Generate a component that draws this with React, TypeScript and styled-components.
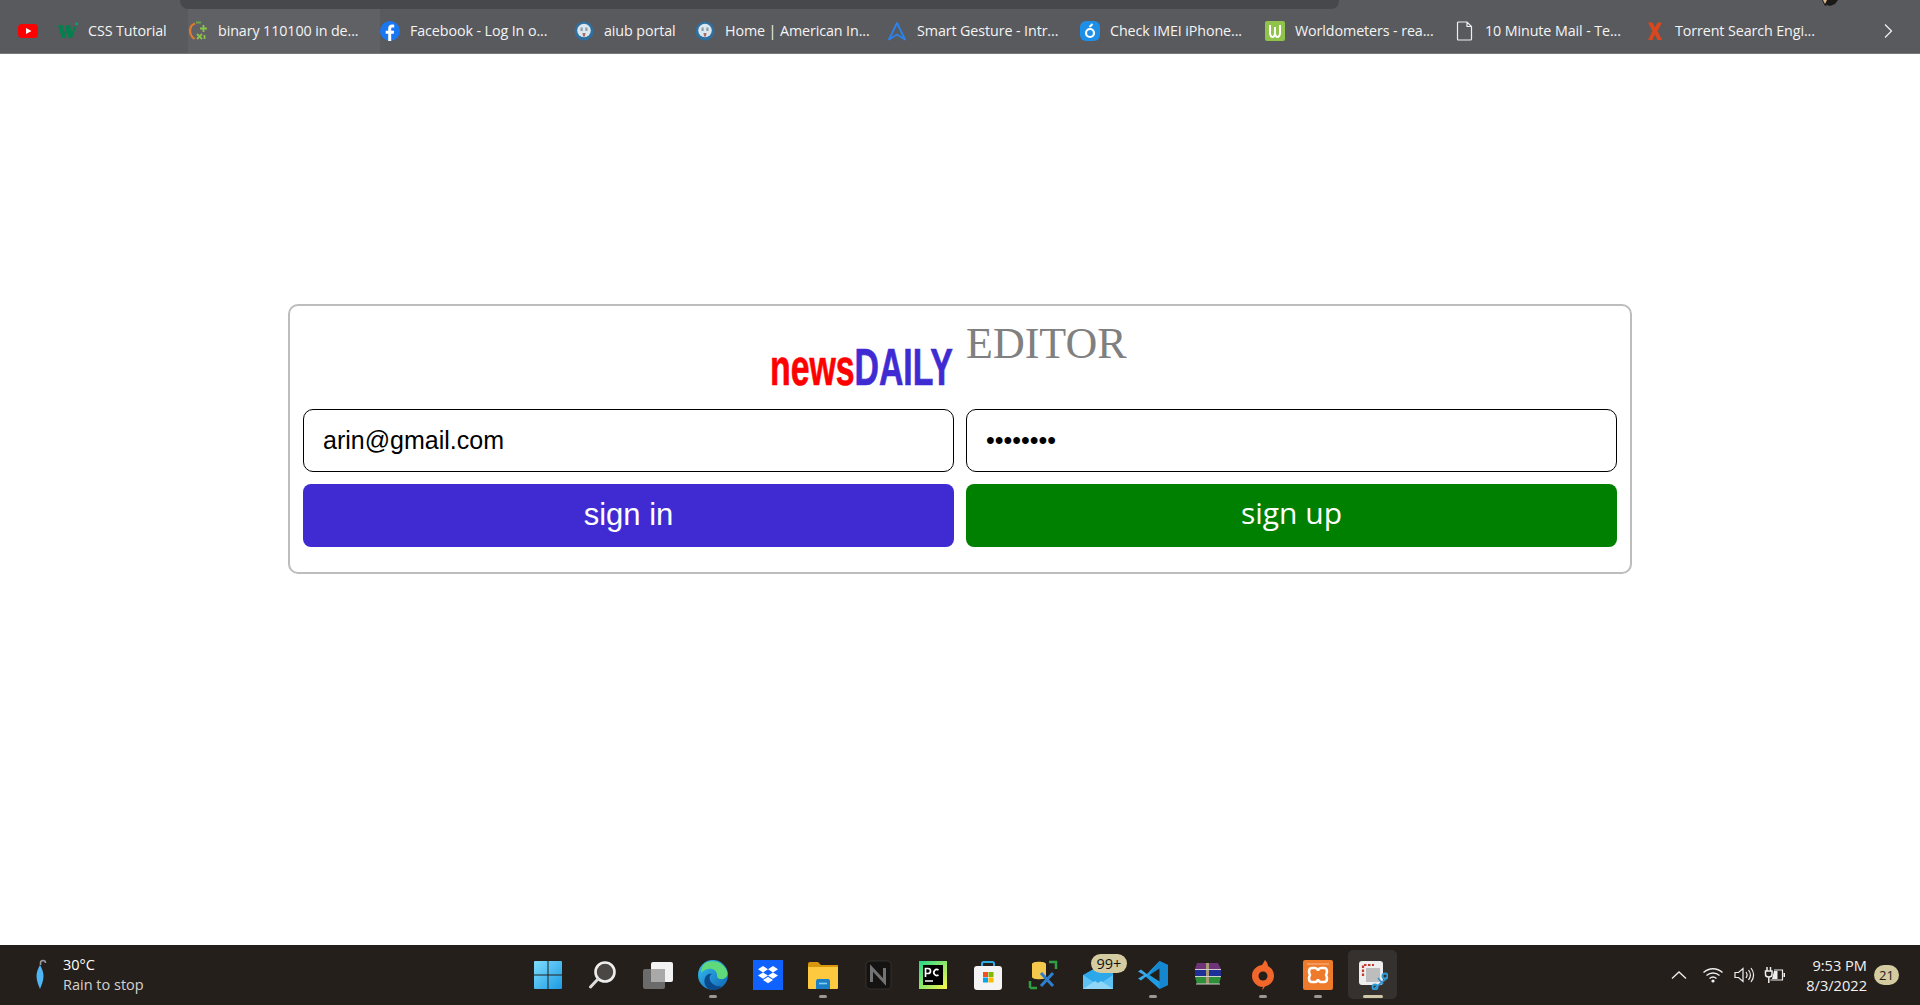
import { ReactNode } from 'react';
import styled, { createGlobalStyle } from 'styled-components';

const uiFont = '"Open Sans", "Noto Sans", sans-serif';

const bookmarks: { label?: string, icon: ReactNode, width: number, active?: boolean }[] = [
  { icon: <YouTubeIcon />, width: 40 },
  { label: 'CSS Tutorial', icon: <W3Icon />, width: 130 },
  { label: 'binary 110100 in de...', icon: <SymbolabIcon />, width: 192, active: true },
  { label: 'Facebook - Log In o...', icon: <FacebookIcon />, width: 194 },
  { label: 'aiub portal', icon: <AiubIcon />, width: 121 },
  { label: 'Home | American In...', icon: <AiubIcon />, width: 192 },
  { label: 'Smart Gesture - Intr...', icon: <GestureIcon />, width: 193 },
  { label: 'Check IMEI iPhone...', icon: <ImeiIcon />, width: 185 },
  { label: 'Worldometers - rea...', icon: <WorldometerIcon />, width: 190 },
  { label: '10 Minute Mail - Te...', icon: <PageIcon />, width: 190 },
  { label: 'Torrent Search Engi...', icon: <TorrentIcon />, width: 200 },
];

const taskbarApps: { icon: ReactNode, running?: boolean, active?: boolean }[] = [
  { icon: <WindowsIcon /> },
  { icon: <SearchIcon /> },
  { icon: <TaskViewIcon /> },
  { icon: <EdgeIcon />, running: true },
  { icon: <DropboxIcon /> },
  { icon: <FolderIcon />, running: true },
  { icon: <NotionIcon /> },
  { icon: <PyCharmIcon /> },
  { icon: <StoreIcon /> },
  { icon: <ToolIcon /> },
  { icon: <MailIcon /> },
  { icon: <VsCodeIcon />, running: true },
  { icon: <WinRarIcon /> },
  { icon: <OriginIcon />, running: true },
  { icon: <XamppIcon />, running: true },
  { icon: <SnipIcon />, running: true, active: true },
];

const App = () => (
  <Page>
    <GlobalStyle />
    <BookmarkBar>
      <AddressEdge />
      <AvatarEdge viewBox="0 0 18 6">
        <path d="M1 0h16l-3 4-5 2-3-1-2 1z" fill="#1c1a18" />
        <path d="M2 0h4L4 4z" fill="#d9b48c" />
      </AvatarEdge>
      <BookmarkList>
        {bookmarks.map(({ label, icon, width, active }, index) => (
          <Bookmark key={index} $width={width} $active={active}>
            <FavIcon>{icon}</FavIcon>
            {label && <BookmarkLabel>{label}</BookmarkLabel>}
          </Bookmark>
        ))}
      </BookmarkList>
      <MoreButton viewBox="0 0 12 16">
        <path d="M3 1.500 9.500 8 3 14.500" fill="none" stroke="#eee" strokeWidth="1.300" />
      </MoreButton>
    </BookmarkBar>

    <Main>
      <Card>
        <BrandCell>
          <Wordmark>
            <WordmarkText>
              <News>news</News>
              <Daily>DAILY</Daily>
            </WordmarkText>
          </Wordmark>
        </BrandCell>
        <EditorTitle>EDITOR</EditorTitle>
        <Field type="text" defaultValue="arin@gmail.com" />
        <Field type="password" defaultValue="password" />
        <SignInButton>sign in</SignInButton>
        <SignUpButton>sign up</SignUpButton>
      </Card>
    </Main>

    <Taskbar>
      <Weather>
        <UmbrellaIcon />
        <WeatherText>
          <Temperature>30°C</Temperature>
          <Forecast>Rain to stop</Forecast>
        </WeatherText>
      </Weather>

      <AppList>
        {taskbarApps.map(({ icon, running, active }, index) => (
          <AppSlot key={index} $active={active}>
            {icon}
            {running && <RunningMark $active={active} />}
          </AppSlot>
        ))}
      </AppList>

      <Tray>
        <TrayIcons>
          <TrayChevron viewBox="0 0 20 20" $width={20}>
            <path d="M3 13.500 10 7l7 6.500" fill="none" stroke="#eee" strokeWidth="1.300" />
          </TrayChevron>
          <TrayIcon viewBox="0 0 22 20" $width={22}>
            <path d="M1.500 7.500c5.500-5 13.500-5 19 0M4.500 10.500c3.800-3.300 9.200-3.300 13 0M7.500 13.500c2-1.700 5-1.700 7 0" fill="none" stroke="#eee" strokeWidth="1.400" />
            <circle cx="11" cy="16" r="1.600" fill="#eee" />
          </TrayIcon>
          <TrayIcon viewBox="0 0 22 20" $width={22}>
            <path d="M2 7.500h3.500L10 3.500v13l-4.500-4H2z" fill="none" stroke="#eee" strokeWidth="1.200" />
            <path d="M13 7c1.300 1.800 1.300 4.200 0 6M15.500 5c2.300 3 2.300 7 0 10M18 3c3.200 4.300 3.200 9.700 0 14" fill="none" stroke="#eee" strokeWidth="1.200" />
          </TrayIcon>
          <TrayIcon viewBox="0 0 22 20" $width={22}>
            <path d="M3 2v4M6.500 2v4M1.500 6h6.500v3.500c0 1.500-1.500 2.500-3.200 2.500S1.500 11 1.500 9.500zM4.800 12v6" fill="none" stroke="#eee" strokeWidth="1.500" />
            <path d="M10 5h8.500v10H6.500" fill="none" stroke="#eee" strokeWidth="1.200" />
            <path d="M10 6h3.500v8H8z" fill="#eee" />
            <path d="M19.500 8h1.500v4h-1.500z" fill="#eee" />
          </TrayIcon>
        </TrayIcons>
        <Clock>
          <span>9:53 PM</span>
          <span>8/3/2022</span>
        </Clock>
        <NotificationBadge>21</NotificationBadge>
      </Tray>
    </Taskbar>
  </Page>
);

export default App;

function YouTubeIcon() {
  return (
    <svg viewBox="0 0 20 20" width="20" height="20">
      <rect x="0" y="3" width="20" height="14" rx="4" fill="#f00" />
      <path d="m8 7 5.500 3L8 13z" fill="#fff" />
    </svg>
  );
}

function W3Icon() {
  return (
    <svg viewBox="0 0 20 20" width="20" height="20">
      <path d="M0 4h4.500l2 8 2-8h3.500l2 8 1.500-6.500h3L14 17h-3.500L9 10.500 7.500 17H4z" fill="#04804f" />
      <path d="M17.500 1.500h2.300V4h-2.300z" fill="#04aa6d" />
    </svg>
  );
}

function SymbolabIcon() {
  return (
    <svg viewBox="0 0 20 20" width="20" height="20">
      <path d="M7 2.500C1 4.500 0 13 6.500 18" fill="none" stroke="#e07b2e" strokeWidth="2.200" />
      <path d="M8 1.500h5" fill="none" stroke="#6aa84f" strokeWidth="2" />
      <path d="M15.500 4v7M12 7.500h7M9 13l5 5M14 13l-5 5M16.500 14v4" fill="none" stroke="#8bc34a" strokeWidth="1.800" />
    </svg>
  );
}

function FacebookIcon() {
  return (
    <svg viewBox="0 0 20 20" width="20" height="20">
      <circle cx="10" cy="10" r="10" fill="#1a77f2" />
      <path d="M11.200 20v-7.300h2.500l.4-3h-2.900V7.900c0-.9.300-1.400 1.500-1.400h1.500V3.800c-.7-.1-1.400-.2-2.200-.2-2.200 0-3.800 1.400-3.800 3.900v2.200H5.700v3h2.500V20z" fill="#fff" />
    </svg>
  );
}

function AiubIcon() {
  return (
    <svg viewBox="0 0 20 20" width="20" height="20">
      <circle cx="10" cy="10" r="9.500" fill="#2f6f9f" />
      <circle cx="10" cy="9.500" r="6.800" fill="#dbe7ee" />
      <path d="M6.500 6.500h2.200v3.500H6.500zM11.300 6.500h2.200v3.500h-2.200z" fill="#8a9cab" />
      <path d="M8.500 12h3l-.5 3.500H9z" fill="#a86a6a" />
    </svg>
  );
}

function GestureIcon() {
  return (
    <svg viewBox="0 0 20 20" width="20" height="20">
      <path d="M10 2 2 18.500 10 13.500l8 5z" fill="none" stroke="#2a82ea" strokeWidth="1.900" strokeLinejoin="round" />
    </svg>
  );
}

function ImeiIcon() {
  return (
    <svg viewBox="0 0 20 20" width="20" height="20">
      <rect width="20" height="20" rx="6" fill="#1e8fe8" />
      <circle cx="10" cy="12" r="4" fill="none" stroke="#fff" strokeWidth="2.200" />
      <path d="m9.500 6 3-3" stroke="#fff" strokeWidth="2" />
    </svg>
  );
}

function WorldometerIcon() {
  return (
    <svg viewBox="0 0 20 20" width="20" height="20">
      <rect width="20" height="20" rx="2" fill="#8fc34a" />
      <path d="M5 4v8.500c0 2.500 2 3.500 2.500 3.500S10 15 10 12.500V6M10 12.500c0 2.500 2 3.500 2.500 3.500s2.500-1 2.500-3.500V4" fill="none" stroke="#fff" strokeWidth="2" />
    </svg>
  );
}

function PageIcon() {
  return (
    <svg viewBox="0 0 20 20" width="20" height="20">
      <path d="M3.500 1h8.500l4.500 4.500v12.500a1 1 0 0 1-1 1h-12a1 1 0 0 1-1-1V2a1 1 0 0 1 1-1zM12 1v4.500h4.500" fill="none" stroke="#eee" strokeWidth="1.200" />
    </svg>
  );
}

function TorrentIcon() {
  return (
    <svg viewBox="0 0 20 20" width="20" height="20">
      <path d="M3 1.500h4.500l2.500 5 2.500-5H17l-4.500 8.500 4.500 9h-4.500L10 13.500 7.500 19H3l4.500-9z" fill="#d9481c" />
    </svg>
  );
}

function WindowsIcon() {
  return (
    <svg viewBox="0 0 30 30" width="30" height="30">
      <defs>
        <linearGradient id="windows-fill" x1="0" y1="0" x2="1" y2="1">
          <stop offset="0" stopColor="#7fdcfb" />
          <stop offset="1" stopColor="#1b9be4" />
        </linearGradient>
      </defs>
      <path d="M1 2a1 1 0 0 1 1-1h12.500v13.500H1zM15.500 1H28a1 1 0 0 1 1 1v12.500H15.500zM1 15.500h13.500V29H2a1 1 0 0 1-1-1zM15.500 15.500H29V28a1 1 0 0 1-1 1H15.500z" fill="url(#windows-fill)" />
    </svg>
  );
}

function SearchIcon() {
  return (
    <svg viewBox="0 0 30 30" width="30" height="30">
      <circle cx="17" cy="12" r="9.500" fill="#4a4744" stroke="#eee" strokeWidth="2.600" />
      <path d="m10 19-7.500 8" stroke="#ddd" strokeWidth="3" strokeLinecap="round" />
    </svg>
  );
}

function TaskViewIcon() {
  return (
    <svg viewBox="0 0 30 30" width="30" height="30">
      <rect x="8" y="2" width="22" height="20" rx="2" fill="#f2f2f2" />
      <rect x="0" y="9" width="22" height="20" rx="2" fill="#6b6b6b" />
      <rect x="8" y="9" width="14" height="13" fill="#a9a9a9" />
    </svg>
  );
}

function EdgeIcon() {
  return (
    <svg viewBox="0 0 30 30" width="30" height="30">
      <defs>
        <linearGradient id="edge-fill" x1="0" y1="0" x2="1" y2="1">
          <stop offset="0" stopColor="#35c1f1" />
          <stop offset="1" stopColor="#0f63b5" />
        </linearGradient>
      </defs>
      <circle cx="15" cy="15" r="15" fill="url(#edge-fill)" />
      <path d="M6 4c7-5 19-3 23 7 2 5-2 9-7 8-3-.5-3-3-3-4 0-4-4-7-9-6-3 .5-5 2-7 4 .3-3.500 1-6.500 3-9z" fill="#5fd97a" />
      <path d="M14 30c-6-1-9-7-7-12 1-3 4-5 7-4-3 1-3 5-1 8 2 3 6 5 11 4-3 3-6 4.500-10 4z" fill="#0b4a8c" />
    </svg>
  );
}

function DropboxIcon() {
  return (
    <svg viewBox="0 0 30 30" width="30" height="30">
      <rect width="30" height="30" fill="#0f62fe" />
      <path d="m10 6 5 3.200-5 3.200-5-3.200zM20 6l5 3.200-5 3.200-5-3.200zM5 15.600l5-3.200 5 3.200-5 3.200zM20 12.400l5 3.200-5 3.200-5-3.200zM10 20l5-3.200 5 3.200-5 3.200z" fill="#fff" />
    </svg>
  );
}

function FolderIcon() {
  return (
    <svg viewBox="0 0 30 30" width="30" height="30">
      <path d="M0 4a2 2 0 0 1 2-2h8l3 3h17v4H0z" fill="#d9960f" />
      <path d="M0 7h30v21a1 1 0 0 1-1 1H1a1 1 0 0 1-1-1z" fill="#fdc93f" />
      <path d="M8 21a2 2 0 0 1 2-2h10a2 2 0 0 1 2 2v8H8z" fill="#1a7fc7" />
      <path d="M11 23.500h8" stroke="#7fd0f5" strokeWidth="1.600" />
    </svg>
  );
}

function NotionIcon() {
  return (
    <svg viewBox="0 0 30 30" width="30" height="30">
      <path d="M3 3 7 1h18l3 2v24l-2 2H6l-3-2z" fill="#141312" stroke="#33302d" strokeWidth="1" />
      <path d="M8.500 22V8l13 14V8" fill="none" stroke="#737373" strokeWidth="3" />
    </svg>
  );
}

function PyCharmIcon() {
  return (
    <svg viewBox="0 0 30 30" width="30" height="30">
      <defs>
        <linearGradient id="pycharm-fill" x1="0" y1="0" x2="1" y2="1">
          <stop offset="0" stopColor="#21d789" />
          <stop offset="1" stopColor="#fcf84a" />
        </linearGradient>
      </defs>
      <rect x="1" y="1" width="28" height="28" fill="url(#pycharm-fill)" />
      <rect x="5" y="5" width="20" height="20" fill="#000" />
      <path d="M7 21h8" stroke="#fff" strokeWidth="1.500" />
      <path d="M7.500 17V8.500H10a2.300 2.300 0 0 1 0 5H7.500M20.500 10a3 3 0 1 0 0 5" fill="none" stroke="#fff" strokeWidth="1.700" />
    </svg>
  );
}

function StoreIcon() {
  return (
    <svg viewBox="0 0 30 30" width="30" height="30">
      <path d="M9 7V3.500A1.500 1.500 0 0 1 10.500 2h9A1.500 1.500 0 0 1 21 3.500V7" fill="none" stroke="#2dabe3" strokeWidth="2" />
      <rect x="1" y="6" width="28" height="24" rx="3" fill="#f4f4f4" />
      <rect x="10" y="12" width="5" height="5" fill="#f25022" />
      <rect x="15.500" y="12" width="5" height="5" fill="#7fba00" />
      <rect x="10" y="17.500" width="5" height="5" fill="#00a4ef" />
      <rect x="15.500" y="17.500" width="5" height="5" fill="#ffb900" />
    </svg>
  );
}

function ToolIcon() {
  return (
    <svg viewBox="0 0 30 30" width="30" height="30">
      <path d="M2 28v-7M2 28h7M21 2h7v7" fill="none" stroke="#2f9e44" strokeWidth="2.500" />
      <path d="M4 4c0-3 14-3 14 0v13c0 3-14 3-14 0z" fill="#f5c84c" />
      <path d="m13 26 12-13M25 26 13 13" stroke="#2d7fd0" strokeWidth="3" />
    </svg>
  );
}

function MailIcon() {
  return (
    <MailWrap>
      <svg viewBox="0 0 30 30" width="30" height="30">
        <path d="M0 15 14 7h16v22H0z" fill="#2ba7ea" />
        <path d="M0 15 15 25 30 15v14H0z" fill="#5fc2f3" />
        <path d="M0 29 12 21l3 2 3-2 12 8z" fill="#8fd6f7" />
      </svg>
      <MailBadge>99+</MailBadge>
    </MailWrap>
  );
}

function VsCodeIcon() {
  return (
    <svg viewBox="0 0 30 30" width="30" height="30">
      <path d="M21.500 1 30 5v20l-8.500 4L7 16z" fill="#1f9ce4" />
      <path d="M21.500 1 30 5v20l-8.500 4V8.500L11 15z" fill="#0f7fc8" opacity="0.700" />
      <path d="M3 9.500 0 11.500 6 15l-6 3.500 3 2L10 15z" fill="#3aa8ea" />
      <path d="m21.500 8.500-10 6.500 10 6.500z" fill="#231f1b" />
    </svg>
  );
}

function WinRarIcon() {
  return (
    <svg viewBox="0 0 30 30" width="30" height="30">
      <path d="M4 3h21l3 6H2z" fill="#6e3378" />
      <path d="M2 10h26v6H2z" fill="#1f2f98" />
      <path d="M2 17h26l-2 7H4z" fill="#2f8f38" />
      <path d="M13 3h3v21h-3z" fill="#a89a74" />
      <path d="M2 9.500h26M2 16.500h26M3 24h24" stroke="#cfcfcf" strokeWidth="1" />
    </svg>
  );
}

function OriginIcon() {
  return (
    <svg viewBox="0 0 30 30" width="30" height="30">
      <path d="M17 0c-1 2-2 3.500-3 5C8 6 4 10.500 4 16c0 6 5 11 11 11l-1 3c1-.5 2-2 3-3.500C22.500 25 26 21 26 16c0-5-3-8.500-6-10 0-2-1.500-4.500-3-6z" fill="#f0662b" />
      <circle cx="15" cy="16" r="4.500" fill="#231f1b" />
    </svg>
  );
}

function XamppIcon() {
  return (
    <svg viewBox="0 0 30 30" width="30" height="30">
      <rect width="30" height="30" rx="2" fill="#ee7a2c" />
      <path d="M4 4h22" stroke="#f9b98a" strokeWidth="1" />
      <path d="M9 8h3c2 0 3 2 3 3 0-1 1-3 3-3h3c2.500 0 3 2 3 3.500S23 15 23 15s1 2 1 3.500-.5 3.500-3 3.500h-3c-2 0-3-2-3-3 0 1-1 3-3 3H9c-2.500 0-3-2-3-3.500S7 15 7 15s-1-2-1-3.500S6.500 8 9 8z" fill="none" stroke="#fff" strokeWidth="2.500" />
    </svg>
  );
}

function SnipIcon() {
  return (
    <svg viewBox="0 0 30 30" width="30" height="30">
      <rect x="1" y="1" width="24" height="24" rx="3" fill="#eee" />
      <path d="M5 16V5h11" fill="none" stroke="#c8372d" strokeWidth="2.200" strokeDasharray="2.500 1.500" />
      <rect x="8" y="8" width="14" height="14" fill="#bdbdbd" />
      <path d="m15 30 15-13M20 18l5 6" stroke="#3d8fc9" strokeWidth="1.800" />
      <circle cx="17" cy="27" r="2.500" fill="none" stroke="#2f9bd6" strokeWidth="2" />
      <circle cx="27" cy="16" r="2.500" fill="none" stroke="#2f9bd6" strokeWidth="2" />
    </svg>
  );
}

function UmbrellaIcon() {
  return (
    <svg viewBox="0 0 14 32" width="14" height="32">
      <path d="M7.500 6V4a2.500 2.500 0 0 1 5 0" fill="none" stroke="#9a9a9a" strokeWidth="1.600" />
      <path d="M7 6c1.800 3 3.500 7 3.500 11 0 5-2 9-3.500 13-1.500-4-3.500-8-3.500-13C3.500 13 5.200 9 7 6z" fill="#4fb6f5" />
    </svg>
  );
}

const GlobalStyle = createGlobalStyle`
  html, body {
    margin: 0;
    padding: 0;
    background: #fff;
  }

  * {
    box-sizing: border-box;
  }
`;

const Page = styled.div`
  display: flex;
  flex-direction: column;
  height: 100vh;
  overflow: hidden;
`;

const BookmarkBar = styled.div`
  position: relative;
  display: flex;
  align-items: center;
  justify-content: space-between;
  flex: none;
  height: 54px;
  padding: 8px 26px 0 18px;
  background: #595a5e;
  border-bottom: 1px solid #77787b;
`;

const AddressEdge = styled.div`
  position: absolute;
  top: 0;
  left: 180px;
  width: 1159px;
  height: 9px;
  background: #47484c;
  border-radius: 0 0 8px 8px;
`;

const AvatarEdge = styled.svg`
  position: absolute;
  top: 0;
  left: 1821px;
  width: 18px;
  height: 6px;
`;

const BookmarkList = styled.div`
  display: flex;
  align-items: center;
`;

const Bookmark = styled.div<{ $width: number, $active?: boolean }>`
  display: flex;
  align-items: center;
  gap: 10px;
  width: ${({ $width }) => $width}px;
  height: 44px;
  background: ${({ $active }) => ($active ? '#606165' : 'transparent')};
`;

const FavIcon = styled.span`
  display: flex;
  flex: none;
  width: 20px;
  height: 20px;
`;

const BookmarkLabel = styled.span`
  color: #f4f4f4;
  font-family: ${uiFont};
  font-size: 14.3px;
  letter-spacing: -0.1px;
  white-space: nowrap;
`;

const MoreButton = styled.svg`
  flex: none;
  width: 12px;
  height: 16px;
`;

const Main = styled.main`
  flex: 1;
  padding-top: 250px;
`;

const Card = styled.section`
  display: grid;
  grid-template-columns: 1fr 1fr;
  grid-template-rows: 91px 63px 63px;
  column-gap: 12px;
  row-gap: 12px;
  width: 70%;
  height: 270px;
  margin: 0 auto;
  padding: 0 13px;
  background: #fff;
  border: 2px solid #bdbdbd;
  border-radius: 10px;
`;

const BrandCell = styled.div`
  display: flex;
  justify-content: flex-end;
  padding-top: 36px;
`;

const Wordmark = styled.div`
  width: 184px;
  height: 50px;
`;

const WordmarkText = styled.div`
  font-family: "Liberation Sans", Arial, sans-serif;
  font-size: 52px;
  font-weight: 700;
  line-height: 50px;
  white-space: nowrap;
  -webkit-text-stroke: 0.7px currentColor;
  transform: scaleX(0.65);
  transform-origin: left center;
`;

const News = styled.span`
  color: #f00;
`;

const Daily = styled.span`
  color: #402bd3;
`;

const EditorTitle = styled.h1`
  margin: 0;
  padding-top: 13px;
  color: #808080;
  font-family: "Liberation Serif", "Times New Roman", serif;
  font-size: 44px;
  font-weight: 400;
  line-height: 50px;
`;

const Field = styled.input`
  width: 100%;
  height: 63px;
  padding: 0 19px;
  color: #000;
  font-family: "Liberation Sans", Arial, sans-serif;
  font-size: 25px;
  background: #fff;
  border: 1.5px solid #000;
  border-radius: 10px;
  outline: none;
`;

const ActionButton = styled.button`
  height: 63px;
  padding: 0;
  color: #fff;
  font-size: 31px;
  border: none;
  border-radius: 8px;
`;

const SignInButton = styled(ActionButton)`
  padding-bottom: 2px;
  font-family: "Liberation Sans", Arial, sans-serif;
  background: #402bd3;
`;

const SignUpButton = styled(ActionButton)`
  padding-bottom: 6px;
  font-family: ${uiFont};
  font-size: 30px;
  background: #008000;
`;

const Taskbar = styled.footer`
  display: grid;
  grid-template-columns: 1fr auto 1fr;
  align-items: center;
  flex: none;
  height: 60px;
  background: #251f1b;
  font-family: ${uiFont};
`;

const Weather = styled.div`
  display: flex;
  align-items: center;
  gap: 16px;
  padding-left: 33px;
`;

const WeatherText = styled.div`
  display: flex;
  flex-direction: column;
  font-size: 14.5px;
  line-height: 20px;
`;

const Temperature = styled.span`
  color: #fff;
`;

const Forecast = styled.span`
  color: #d4d2d0;
`;

const AppList = styled.div`
  display: flex;
  align-items: center;
`;

const AppSlot = styled.div<{ $active?: boolean }>`
  position: relative;
  display: flex;
  align-items: center;
  justify-content: center;
  width: 55px;
  height: 52px;

  &::before {
    content: '';
    position: absolute;
    inset: 1px 3px 2px;
    background: ${({ $active }) => ($active ? '#35312e' : 'transparent')};
    border-radius: 5px;
  }

  > * {
    position: relative;
  }
`;

const RunningMark = styled.span<{ $active?: boolean }>`
  && {
    position: absolute;
  }

  bottom: 3px;
  left: 50%;
  width: ${({ $active }) => ($active ? 20 : 8)}px;
  height: 3px;
  background: ${({ $active }) => ($active ? '#cfc8a8' : '#9a9794')};
  border-radius: 2px;
  transform: translateX(-50%);
`;

const MailWrap = styled.div`
  width: 30px;
  height: 30px;
`;

const MailBadge = styled.span`
  position: absolute;
  top: -6px;
  left: 8px;
  padding: 0 6px;
  color: #111;
  font-size: 14.5px;
  line-height: 19px;
  background: #d4cba0;
  border-radius: 10px;
`;

const Tray = styled.div`
  display: flex;
  align-items: center;
  justify-content: flex-end;
  padding-right: 21px;
`;

const TrayIcons = styled.div`
  display: flex;
  align-items: center;
  gap: 9px;
  margin-right: 20px;
`;

const TrayIcon = styled.svg<{ $width: number }>`
  width: ${({ $width }) => $width}px;
  height: 20px;
`;

const TrayChevron = styled(TrayIcon)`
  margin-right: 4px;
`;

const Clock = styled.div`
  display: flex;
  flex-direction: column;
  align-items: flex-end;
  margin-right: 7px;
  color: #f2f2f2;
  font-size: 14.6px;
  line-height: 20px;
`;

const NotificationBadge = styled.span`
  display: flex;
  align-items: center;
  justify-content: center;
  width: 25px;
  height: 20px;
  color: #1c1a18;
  font-size: 13px;
  background: #d4cba0;
  border-radius: 10px;
`;
